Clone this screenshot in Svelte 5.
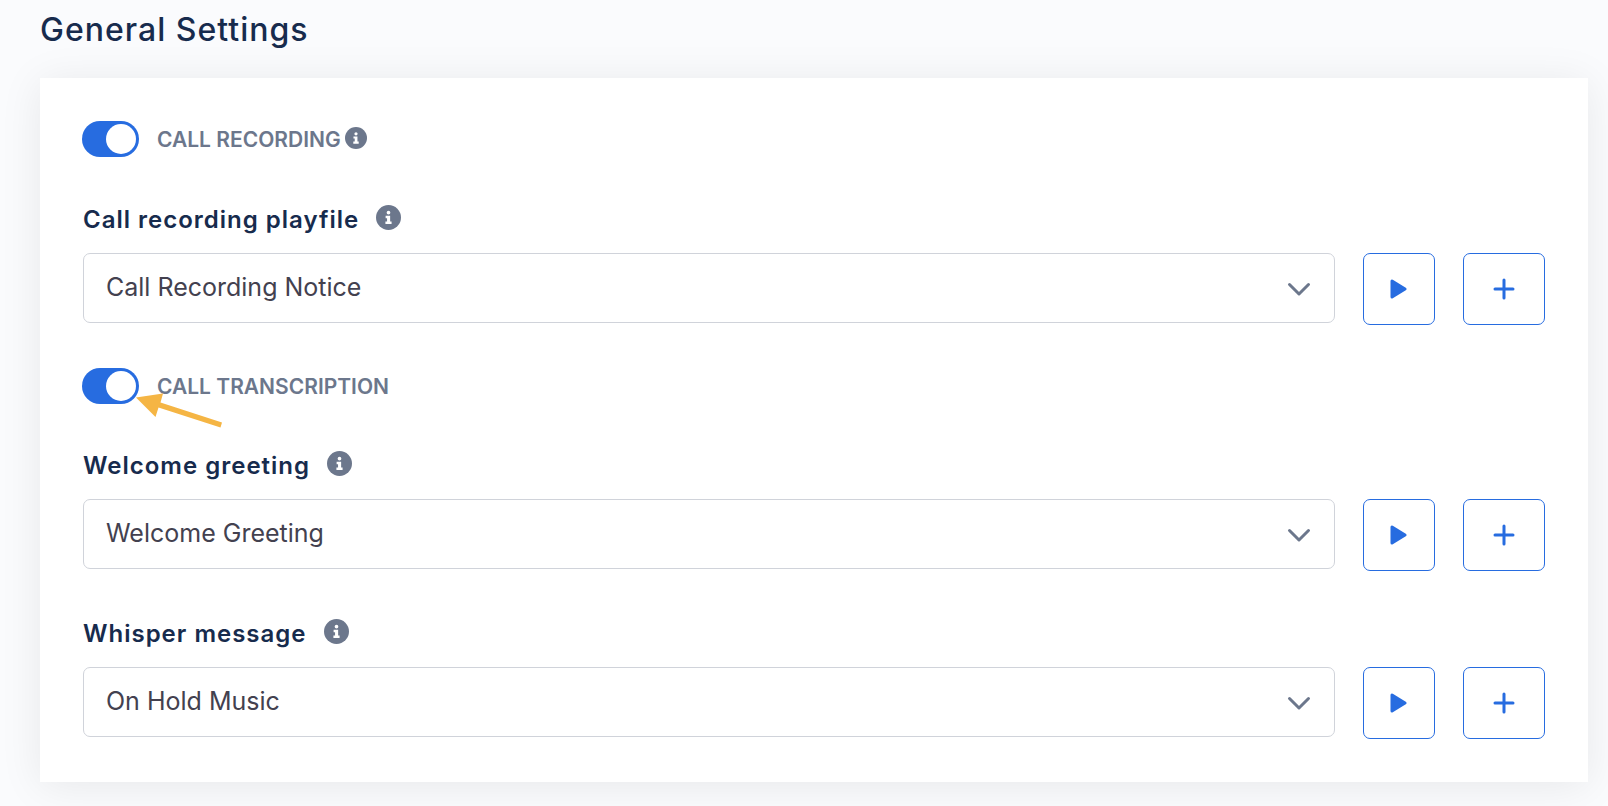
<script lang="ts">
	let recording = $state(true);
	let transcription = $state(true);

	const files = ['Call Recording Notice', 'Welcome Greeting', 'On Hold Music'];

	let playfile = $state('Call Recording Notice');
	let greeting = $state('Welcome Greeting');
	let whisper = $state('On Hold Music');
</script>

{#snippet info(small = false)}
	<svg class="info" class:small viewBox="0 0 26 26" aria-hidden="true">
		<circle cx="13" cy="13" r="13" fill="#6c778c" />
		<circle cx="13" cy="8" r="1.9" fill="#fff" />
		<path d="M10 11.2h4.7v6h1.5v2.5H9.8v-2.5h1.7v-3.5H10z" fill="#fff" />
	</svg>
{/snippet}

{#snippet controls(name: string)}
	<button type="button" class="play" aria-label="Play {name}">
		<svg width="20" height="20" viewBox="0 0 20 20" aria-hidden="true">
			<path d="M3 2v16L16 10z" fill="#276ce0" stroke="#276ce0" stroke-width="3" stroke-linejoin="round" />
		</svg>
	</button>
	<button type="button" class="add" aria-label="Add {name}">
		<svg width="22" height="22" viewBox="0 0 22 22" aria-hidden="true">
			<path d="M11 2v18M2 11h18" stroke="#276ce0" stroke-width="3" stroke-linecap="round" />
		</svg>
	</button>
{/snippet}

{#snippet chevron()}
	<svg class="chevron" width="24" height="16" viewBox="0 0 24 16" aria-hidden="true">
		<path d="M2.5 3.5l9.5 9.5 9.500-9.500" fill="none" stroke="#6c778c" stroke-width="3" stroke-linecap="round" stroke-linejoin="round" />
	</svg>
{/snippet}

<main>
	<h1>General Settings</h1>

	<section class="card">
		<div class="toggle">
			<input id="recording" type="checkbox" role="switch" bind:checked={recording} />
			<label for="recording">CALL RECORDING</label>
			{@render info(true)}
		</div>

		<div class="field">
			<div class="title">
				<label for="playfile">Call recording playfile</label>
				{@render info()}
			</div>
			<div class="row">
				<div class="select">
					<select id="playfile" bind:value={playfile}>
						{#each files as file (file)}
							<option>{file}</option>
						{/each}
					</select>
					{@render chevron()}
				</div>
				{@render controls('call recording playfile')}
			</div>
		</div>

		<div class="toggle second">
			<input id="transcription" type="checkbox" role="switch" bind:checked={transcription} />
			<label for="transcription">CALL TRANSCRIPTION</label>
			<svg class="arrow" width="90" height="36" viewBox="0 0 90 36" aria-hidden="true">
				<path d="M0 5.500L27 1.500L24.500 10.500L86 30.500L84.500 35.500L22.500 15.500L19.500 25z" fill="#f5b544" />
			</svg>
		</div>

		<div class="field">
			<div class="title">
				<label for="greeting">Welcome greeting</label>
				{@render info()}
			</div>
			<div class="row">
				<div class="select">
					<select id="greeting" bind:value={greeting}>
						{#each files as file (file)}
							<option>{file}</option>
						{/each}
					</select>
					{@render chevron()}
				</div>
				{@render controls('welcome greeting')}
			</div>
		</div>

		<div class="field">
			<div class="title">
				<label for="whisper">Whisper message</label>
				{@render info()}
			</div>
			<div class="row">
				<div class="select">
					<select id="whisper" bind:value={whisper}>
						{#each files as file (file)}
							<option>{file}</option>
						{/each}
					</select>
					{@render chevron()}
				</div>
				{@render controls('whisper message')}
			</div>
		</div>
	</section>
</main>

<style>
	:global(body) {
		background: #fafbfd;
		font-family: Inter, 'Liberation Sans', sans-serif;
		overflow-x: hidden;
	}
	main {
		padding: 8px 20px 24px 40px;
	}
	h1 {
		margin: 0 0 26px;
		font-size: 32px;
		line-height: 44px;
		font-weight: 500;
		letter-spacing: 1px;
		color: #172b4d;
	}
	.card {
		padding: 43px 42px;
		background: #fff;
		box-shadow: 0 4px 40px rgba(0, 0, 0, 0.08);
	}

	/* Switches */
	.toggle {
		position: relative;
		display: flex;
		align-items: center;
		height: 36px;
		margin-bottom: 46px;
	}
	.toggle.second {
		margin: 43px 0 45px;
	}
	.toggle input {
		appearance: none;
		display: flex;
		align-items: center;
		flex: none;
		width: 57px;
		height: 36px;
		margin: 0 18px 0 0;
		padding: 0 3px;
		border-radius: 18px;
		background: #b3bac5;
		cursor: pointer;
	}
	.toggle input::before {
		content: '';
		width: 30px;
		height: 30px;
		border-radius: 50%;
		background: #fff;
	}
	.toggle input:checked {
		justify-content: flex-end;
		background: #276ce0;
	}
	.toggle label {
		padding-top: 2px;
		font-size: 21px;
		line-height: 28px;
		font-weight: 600;
		color: #6c778c;
	}
	.arrow {
		position: absolute;
		left: 54px;
		top: 24px;
		pointer-events: none;
	}

	/* Fields */
	.field {
		margin: 0 1px;
	}
	.field + .field {
		margin-top: 46px;
	}
	.title {
		display: flex;
		align-items: center;
		gap: 17px;
		height: 34px;
		margin-bottom: 16px;
	}
	.title label {
		font-size: 24px;
		line-height: 32px;
		font-weight: 600;
		letter-spacing: 1px;
		color: #172b4d;
	}
	.info {
		flex: none;
		width: 25px;
		height: 25px;
		margin-bottom: 6px;
	}
	.info.small {
		width: 22px;
		height: 22px;
		margin: 0 0 3px 4px;
	}
	.row {
		display: flex;
		gap: 28px;
	}
	.select {
		position: relative;
		flex: 1;
		height: 70px;
	}
	select {
		appearance: none;
		width: 100%;
		height: 70px;
		padding: 0 64px 2px 22px;
		border: 1px solid #d0d3da;
		border-radius: 7px;
		background: #fff;
		color: #43414f;
		font-family: inherit;
		font-size: 25px;
		line-height: 32px;
	}
	.chevron {
		position: absolute;
		right: 24px;
		top: 28px;
		pointer-events: none;
	}
	button {
		display: flex;
		align-items: center;
		justify-content: center;
		flex: none;
		height: 72px;
		padding: 0;
		border: 1px solid #276ce0;
		border-radius: 7px;
		background: #fff;
		cursor: pointer;
	}
	.play {
		width: 72px;
	}
	.add {
		width: 82px;
	}
</style>
